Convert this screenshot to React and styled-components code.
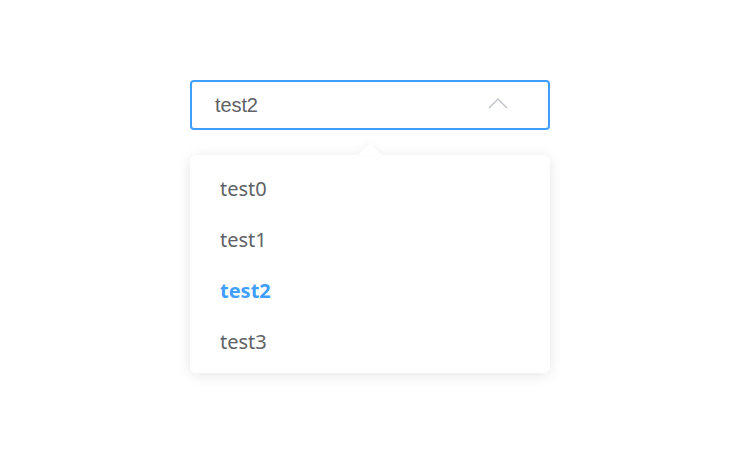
import React from "react";
import styled, { createGlobalStyle } from "styled-components";

const Global = createGlobalStyle`
  html, body { margin: 0; padding: 0; background: #ffffff; }
  body { font-family: "Liberation Sans", Arial, sans-serif; }
`;

const Page = styled.div`
  width: 751px;
  height: 466px;
  box-sizing: border-box;
  padding: 80px 0 0 190px;
  display: flex;
  flex-direction: column;
`;

const Select = styled.div`
  width: 360px;
  height: 50px;
  box-sizing: border-box;
  border: 2px solid #409eff;
  border-radius: 4px;
  display: flex;
  align-items: center;
  justify-content: space-between;
  padding: 0 40px 0 23px;
`;

const Value = styled.span`
  font-family: "Liberation Sans", Arial, sans-serif;
  font-size: 20px;
  color: #606266;
  letter-spacing: -0.1px;
`;

const Chevron = styled.svg`
  width: 20px;
  height: 12px;
  display: block;
  margin-top: -4px;
`;

const Menu = styled.ul`
  position: relative;
  list-style: none;
  margin: 25px 0 0 0;
  padding: 8px 0 6px;
  width: 360px;
  box-sizing: border-box;
  background: #fff;
  border-radius: 6px;
  box-shadow: 0 2px 14px rgba(0, 0, 0, 0.1);

  &::before {
    content: "";
    position: absolute;
    top: -11px;
    left: 168px;
    border-left: 12px solid transparent;
    border-right: 12px solid transparent;
    border-bottom: 11px solid #fff;
    filter: drop-shadow(0 -2px 3px rgba(0, 0, 0, 0.03));
  }
`;

const Item = styled.li`
  height: 51px;
  display: flex;
  align-items: center;
  padding-left: 30px;
  font-family: "Noto Sans", "Open Sans", sans-serif;
  font-size: 20px;
  color: ${(p) => (p.$active ? "#409eff" : "#606266")};
  font-weight: ${(p) => (p.$active ? 700 : 400)};
`;

const options = ["test0", "test1", "test2", "test3"];

export default function App() {
  const selected = "test2";
  return (
    <>
      <Global />
      <Page>
        <Select>
          <Value>{selected}</Value>
          <Chevron viewBox="0 0 20 12">
            <polyline points="1,11 10,2 19,11" fill="none" stroke="#b8bcc4" strokeWidth="1.2" />
          </Chevron>
        </Select>
        <Menu>
          {options.map((o) => (
            <Item key={o} $active={o === selected}>
              {o}
            </Item>
          ))}
        </Menu>
      </Page>
    </>
  );
}
